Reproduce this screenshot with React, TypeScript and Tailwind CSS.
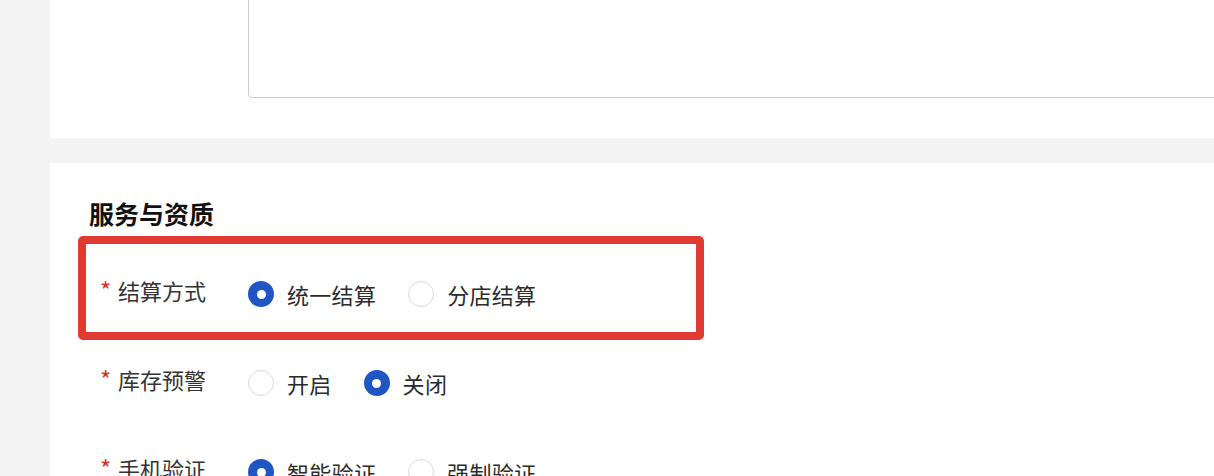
import React from "react";

const font = { fontFamily: '"Noto Sans CJK SC", "Noto Sans", sans-serif' };

function Radio({ checked, label }: { checked?: boolean; label: string }) {
  return (
    <div className="flex items-center gap-[13px]">
      {checked ? (
        <span className="flex h-[26px] w-[26px] items-center justify-center rounded-full bg-[#1f56c4]">
          <span className="h-[9px] w-[9px] rounded-full bg-white" />
        </span>
      ) : (
        <span className="h-[26px] w-[26px] rounded-full border border-[#d6dae3] bg-white" />
      )}
      <span className="text-[22px] leading-[32px] tracking-[0.3px] text-[#2b2b2b]">{label}</span>
    </div>
  );
}

function Row({ label, options }: { label: string; options: { label: string; checked?: boolean }[] }) {
  return (
    <div className="flex h-[32px] items-center">
      <div className="flex w-[148px] items-center pb-[8px]">
        <span className="w-[18px] text-[24px] leading-[32px] text-[#d3322a]">*</span>
        <span className="text-[22px] leading-[32px] text-[#333333]">{label}</span>
      </div>
      <div className="flex items-center gap-[32px]">
        {options.map((o) => (
          <Radio key={o.label} label={o.label} checked={o.checked} />
        ))}
      </div>
    </div>
  );
}

export default function App() {
  return (
    <div className="flex h-[476px] w-[1214px] overflow-hidden bg-[#f4f4f4] pl-[50px]" style={font}>
      <div className="flex min-w-0 flex-1 flex-col">
        <div className="h-[138px] shrink-0 overflow-hidden bg-white">
          <div className="-mt-[22px] ml-[198px] h-[120px] w-[1100px] rounded-[4px] border border-[#cccccc]" />
        </div>
        <div className="mt-[25px] flex-1 bg-white pl-[28px] pt-[34px]">
          <div className="pl-[11px] text-[25px] font-bold leading-[32px] text-[#111111]">服务与资质</div>
          <div className="mt-[7px] w-[626px] rounded-[5px] border-[8px] border-[#e03a31] pb-[22px] pl-[14px] pt-[34px]">
            <Row label="结算方式" options={[{ label: "统一结算", checked: true }, { label: "分店结算" }]} />
          </div>
          <div className="mt-[27px] pl-[22px]">
            <Row label="库存预警" options={[{ label: "开启" }, { label: "关闭", checked: true }]} />
          </div>
          <div className="mt-[57px] pl-[22px]">
            <Row label="手机验证" options={[{ label: "智能验证", checked: true }, { label: "强制验证" }]} />
          </div>
        </div>
      </div>
    </div>
  );
}
